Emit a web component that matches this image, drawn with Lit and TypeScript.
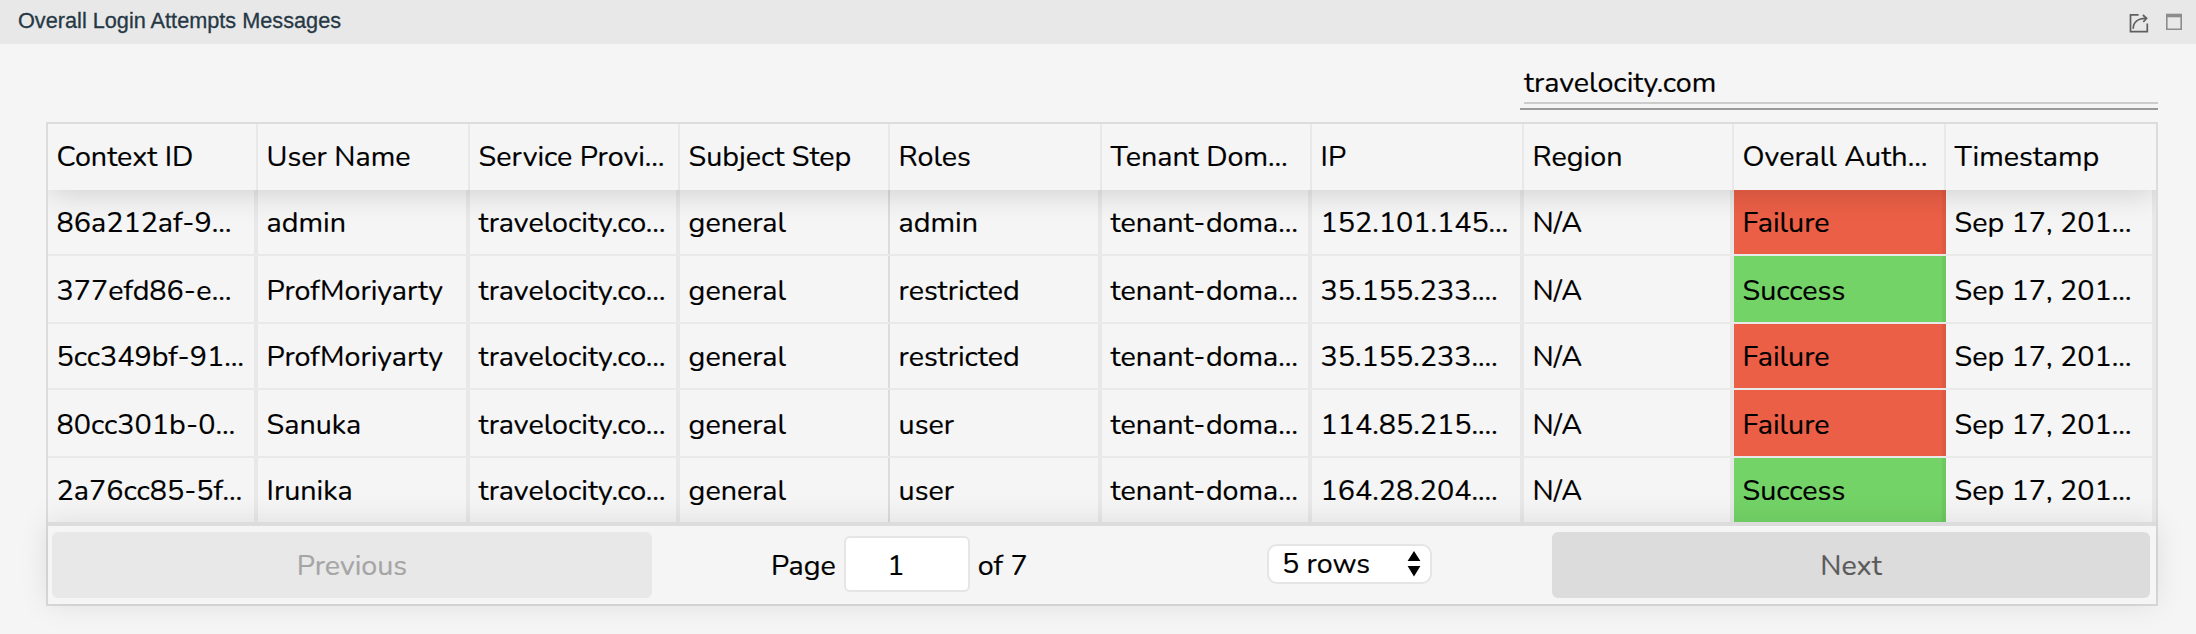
import { LitElement, html, css } from "lit";
import { customElement, state } from "lit/decorators.js";
import { classMap } from "lit/directives/class-map.js";

const HEADERS = [
  "Context ID",
  "User Name",
  "Service Provi…",
  "Subject Step",
  "Roles",
  "Tenant Dom…",
  "IP",
  "Region",
  "Overall Auth…",
  "Timestamp",
];

const ROWS = [
  ["86a212af-9…", "admin", "travelocity.co…", "general", "admin", "tenant-doma…", "152.101.145…", "N/A", "Failure", "Sep 17, 201…"],
  ["377efd86-e…", "ProfMoriyarty", "travelocity.co…", "general", "restricted", "tenant-doma…", "35.155.233.…", "N/A", "Success", "Sep 17, 201…"],
  ["5cc349bf-91…", "ProfMoriyarty", "travelocity.co…", "general", "restricted", "tenant-doma…", "35.155.233.…", "N/A", "Failure", "Sep 17, 201…"],
  ["80cc301b-0…", "Sanuka", "travelocity.co…", "general", "user", "tenant-doma…", "114.85.215.…", "N/A", "Failure", "Sep 17, 201…"],
  ["2a76cc85-5f…", "Irunika", "travelocity.co…", "general", "user", "tenant-doma…", "164.28.204.…", "N/A", "Success", "Sep 17, 201…"],
];

@customElement("panel-header")
class PanelHeader extends LitElement {
  static styles = css`
    :host {
      display: flex;
      align-items: center;
      justify-content: space-between;
      box-sizing: border-box;
      height: 44px;
      padding: 0 14px 0 18px;
      background: #e8e8e8;
      color: #263845;
      font-family: "Liberation Sans", Arial, sans-serif;
    }
    .title {
      font-size: 21.7px;
      line-height: 28px;
      padding-bottom: 3px;
      white-space: nowrap;
      -webkit-text-stroke: 0.3px #263845;
    }
    .tools {
      display: flex;
      align-items: center;
      gap: 17px;
      padding-top: 2px;
    }
    svg {
      display: block;
    }
  `;
  render() {
    return html`
      <div class="title">Overall Login Attempts Messages</div>
      <div class="tools">
        <svg width="20" height="20" viewBox="0 0 20 20" fill="none" stroke="#5f5f5f" stroke-width="1.7">
          <path d="M9.6 1.9H1.5V18.6H18.3V10.5" />
          <path d="M4.2 15.8C4.2 9.5 8.7 5.4 17 5.4" />
          <path d="M13.9 2L17.6 5.4L14.3 9" />
        </svg>
        <svg width="16" height="20" viewBox="0 0 16 20" fill="none" stroke="#8c8c8c">
          <path d="M.8 2V16.2H15.2V2" stroke-width="1.6" />
          <path d="M0 2.5H16" stroke-width="3.6" />
        </svg>
      </div>
    `;
  }
}

@customElement("login-table")
class LoginTable extends LitElement {
  static styles = css`
    :host {
      display: block;
      border: 2px solid rgba(0, 0, 0, 0.1);
      color: #000;
    }
    .rows {
      overflow: hidden;
      height: 398px;
    }
    .row {
      display: grid;
      grid-template-columns: 210px 212px 210px 210px 212px 210px 212px 210px 212px 210px;
      box-sizing: border-box;
      height: 66px;
      border-bottom: 2px solid #e9e9e9;
    }
    .row.even {
      height: 68px;
    }
    .row.even .cell {
      padding-top: 4px;
    }
    .row.last {
      height: 64px;
      border-bottom: 0;
    }
    .row.head {
      position: relative;
      border-bottom: 0;
      box-shadow: 0 4px 30px 0 rgba(0, 0, 0, 0.15);
    }
    .cell {
      display: flex;
      align-items: center;
      box-sizing: border-box;
      min-width: 0;
      padding: 2px 0 0 8.6px;
      white-space: nowrap;
      line-height: 38px;
      border-right: 4px solid rgba(0, 0, 0, 0.05);
    }
    .cell.thin {
      border-right: 2px solid rgba(0, 0, 0, 0.1);
    }
    .head .cell {
      border-right: 2px solid rgba(0, 0, 0, 0.05);
      padding-top: 0;
    }
    .head .cell:last-child {
      border-right: 0;
    }
    .failure {
      background: #eb5f46;
    }
    .success {
      background: #73d367;
    }
    .pager {
      position: relative;
      display: grid;
      grid-template-columns: 600px 1fr 598px;
      box-sizing: border-box;
      height: 82px;
      padding: 6px 6px 6px 4px;
      border-top: 4px solid #dcdcdc;
      box-shadow: 0 0 30px 0 rgba(0, 0, 0, 0.1);
    }
    .button {
      display: flex;
      align-items: center;
      justify-content: center;
      box-sizing: border-box;
      height: 66px;
      border-radius: 6px;
      background: #dcdcdc;
      color: #5a5a5a;
      -webkit-text-stroke-color: #5a5a5a;
    }
    .button.disabled {
      background: #e8e8e8;
      color: #a5a5a5;
      -webkit-text-stroke-color: #a5a5a5;
    }
    .center {
      display: flex;
      justify-content: space-between;
      padding: 4px 120px 0 119px;
    }
    .page {
      display: flex;
      gap: 8px;
      line-height: 60px;
    }
    .number {
      box-sizing: border-box;
      width: 126px;
      height: 56px;
      line-height: 56px;
      padding-right: 22px;
      border: 2px solid #e5e5e5;
      border-radius: 6px;
      background: #fff;
      text-align: center;
    }
    .select {
      display: flex;
      align-items: center;
      justify-content: space-between;
      box-sizing: border-box;
      width: 165px;
      height: 40px;
      margin-top: 8px;
      padding: 0 9px 0 13px;
      border: 2px solid #e5e5e5;
      border-radius: 10px;
      background: #fff;
      line-height: 36px;
    }
  `;
  render() {
    return html`
      <div class="rows">
        <div class="row head">${HEADERS.map((h) => html`<div class="cell">${h}</div>`)}</div>
        ${ROWS.map(
          (row, r) => html`
            <div class=${classMap({ row: true, even: r % 2 === 1, last: r === ROWS.length - 1 })}>
              ${row.map(
                (text, c) => html`<div
                  class=${classMap({
                    cell: true,
                    thin: c === 3,
                    failure: text === "Failure",
                    success: text === "Success",
                  })}
                >${text}</div>`
              )}
            </div>
          `
        )}
      </div>
      <div class="pager">
        <div class="button disabled">Previous</div>
        <div class="center">
          <div class="page">
            <span>Page</span>
            <div class="number">1</div>
            <span>of 7</span>
          </div>
          <div class="select">
            <span>5 rows</span>
            <svg width="14" height="26" viewBox="0 0 14 26">
              <path d="M7 0L13.4 10H.6ZM7 25.5L.6 15H13.4Z" fill="#000" />
            </svg>
          </div>
        </div>
        <div class="button">Next</div>
      </div>
    `;
  }
}

@customElement("app-root")
class AppRoot extends LitElement {
  @state() private query = "travelocity.com";

  static styles = css`
    :host {
      display: block;
      box-sizing: border-box;
      height: 634px;
      overflow: hidden;
      background: #f5f5f5;
      font-family: "Nunito", "Lato", sans-serif;
      font-size: 28.7px;
      -webkit-text-stroke: 0.2px #000;
    }
    .search {
      box-sizing: border-box;
      width: 638px;
      height: 66px;
      margin: 0 38px 12px auto;
      padding: 14px 0 4px 4px;
      border-bottom: 2px solid #999;
    }
    .field {
      box-sizing: border-box;
      height: 46px;
      border-bottom: 2px solid #ccc;
      line-height: 50px;
    }
    .table {
      margin: 0 38px 0 46px;
    }
  `;
  render() {
    return html`
      <panel-header></panel-header>
      <div class="search"><div class="field">${this.query}</div></div>
      <login-table class="table"></login-table>
    `;
  }
}
